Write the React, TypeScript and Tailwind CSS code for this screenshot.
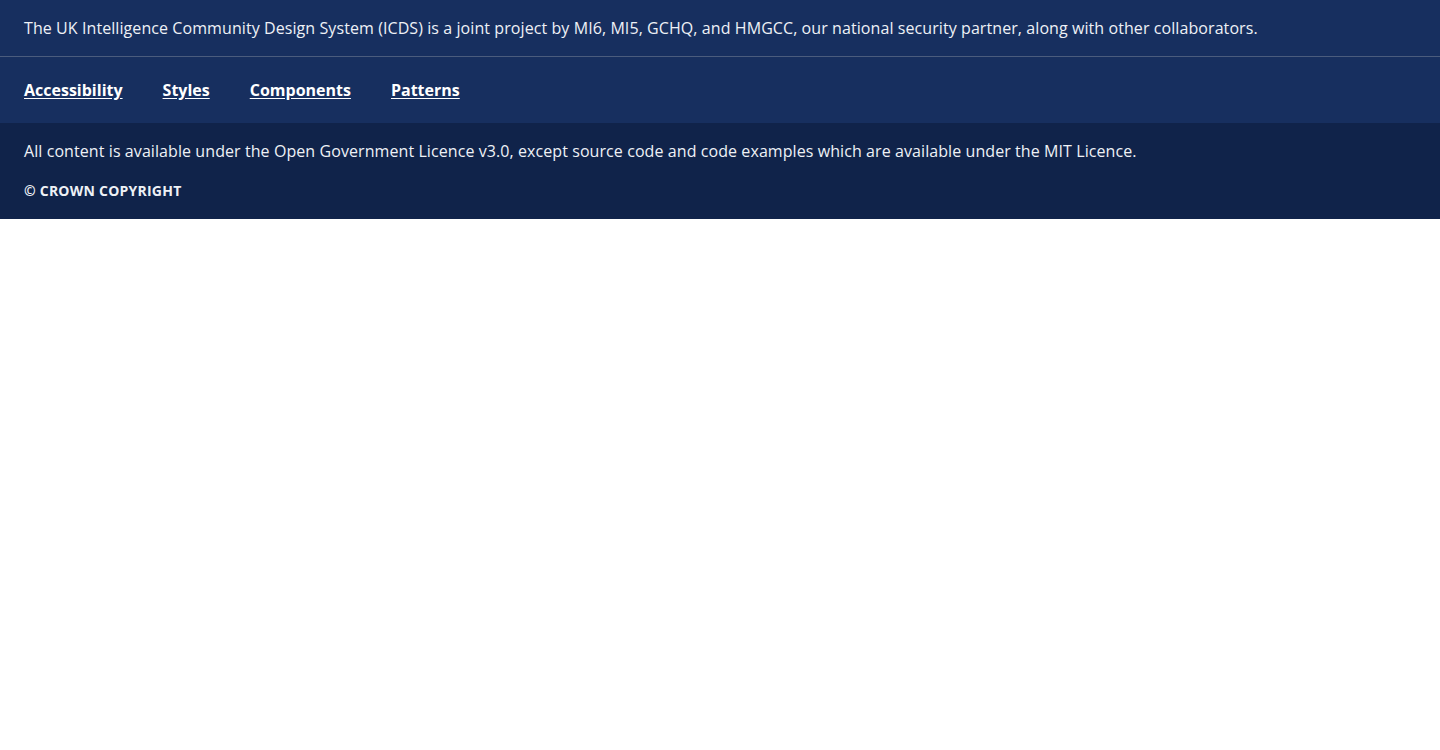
export default function App() {
  const links = ['Accessibility', 'Styles', 'Components', 'Patterns']

  return (
    <div className="min-h-screen bg-white" style={{ fontFamily: '"Open Sans", sans-serif' }}>
      <footer className="w-full text-[#eef1f6]">
        <div className="bg-[#172f5f]">
          <p className="px-6 py-4 text-base leading-6 tracking-[0.08px]">
            The UK Intelligence Community Design System (ICDS) is a joint project by MI6, MI5, GCHQ, and HMGCC, our
            national security partner, along with other collaborators.
          </p>
          <div className="h-px bg-[#4b5c7d]" />
          <nav className="flex gap-10 px-6 py-[21px]">
            {links.map((l) => (
              <a key={l} href="#" className="text-base font-bold leading-6 text-white underline underline-offset-2">
                {l}
              </a>
            ))}
          </nav>
        </div>
        <div className="bg-[#10234a] px-6 pt-4 pb-[18px]">
          <p className="text-base leading-6 tracking-[0.08px]">
            All content is available under the Open Government Licence v3.0, except source code and code examples which
            are available under the MIT Licence.
          </p>
          <p className="mt-[18px] text-sm font-bold uppercase leading-5 tracking-[0.23px]">© Crown copyright</p>
        </div>
      </footer>
    </div>
  )
}
